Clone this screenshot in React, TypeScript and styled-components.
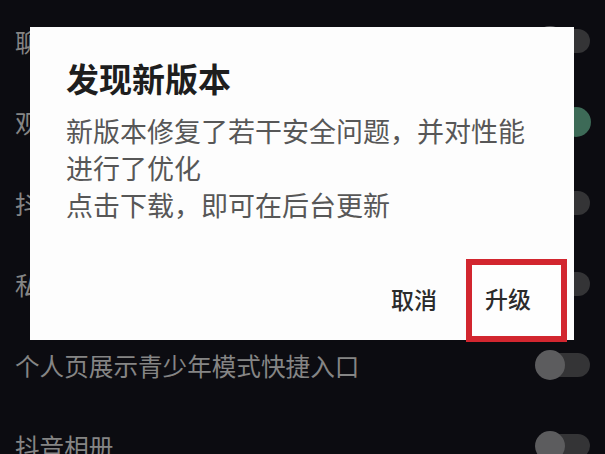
import React from "react";
import styled, { createGlobalStyle } from "styled-components";

const GlobalStyle = createGlobalStyle`
  html, body {
    margin: 0;
    padding: 0;
    background: #0c0c11;
  }
  body {
    font-family: "Noto Sans CJK SC", "Noto Sans", sans-serif;
  }
  * { box-sizing: border-box; }
`;

const Screen = styled.div`
  position: relative;
  width: 605px;
  height: 454px;
  overflow: hidden;
  background: #0c0c11;
`;

const SettingsList = styled.div`
  display: flex;
  flex-direction: column;
`;

const SettingRow = styled.div`
  height: 81px;
  flex: none;
  display: flex;
  align-items: center;
  justify-content: space-between;
  padding: 0 15px;
`;

const RowLabel = styled.span`
  font-size: 24.6px;
  line-height: 32px;
  color: #858585;
  white-space: nowrap;
`;

const Track = styled.div<{ $on?: boolean }>`
  width: 54px;
  height: 24px;
  border-radius: 12px;
  display: flex;
  align-items: center;
  justify-content: ${(p) => (p.$on ? "flex-end" : "flex-start")};
  background: ${(p) => (p.$on ? "#253d33" : "#343436")};
`;

const Knob = styled.div<{ $on?: boolean }>`
  width: 30px;
  height: 30px;
  flex: none;
  border-radius: 50%;
  margin: 0 -1px;
  background: ${(p) => (p.$on ? "#3d6a57" : "#5c5c5e")};
`;

const Dialog = styled.div`
  position: absolute;
  top: 27px;
  left: 30px;
  width: 544px;
  height: 313px;
  background: #fdfdfd;
  padding: 31px 36px 0 36px;
  display: flex;
  flex-direction: column;
`;

const Title = styled.h2`
  margin: 0;
  font-size: 33px;
  line-height: 40px;
  font-weight: 700;
  color: #1e1e1e;
  white-space: nowrap;
`;

const Body = styled.div`
  margin-top: 14px;
  font-size: 27px;
  line-height: 37px;
  color: #575757;
`;

const BodyLine = styled.span`
  display: block;
  white-space: nowrap;
`;

const Actions = styled.div`
  margin-top: auto;
  margin-right: -29px;
  margin-bottom: -2px;
  display: flex;
  justify-content: flex-end;
  align-items: center;
`;

const CancelButton = styled.button`
  border: none;
  background: none;
  padding: 0;
  margin: 0 29px 3px 0;
  font-family: inherit;
  font-size: 23px;
  line-height: 30px;
  font-weight: 500;
  color: #2b2b2b;
`;

const UpgradeButton = styled.button`
  width: 101px;
  height: 83px;
  border: 6px solid #d2262f;
  background: #fefefe;
  padding: 0 0 5px 13px;
  display: flex;
  align-items: center;
  font-family: inherit;
  font-size: 23px;
  line-height: 30px;
  font-weight: 500;
  color: #2b2b2b;
`;

const rows: { label: string; on?: boolean }[] = [
  { label: "聊天" },
  { label: "观看", on: true },
  { label: "抖音" },
  { label: "私信" },
  { label: "个人页展示青少年模式快捷入口" },
  { label: "抖音相册" },
];

export default function App() {
  return (
    <>
      <GlobalStyle />
      <Screen>
        <SettingsList>
          {rows.map((r) => (
            <SettingRow key={r.label}>
              <RowLabel>{r.label}</RowLabel>
              <Track $on={r.on}>
                <Knob $on={r.on} />
              </Track>
            </SettingRow>
          ))}
        </SettingsList>
        <Dialog>
          <Title>发现新版本</Title>
          <Body>
            <BodyLine>新版本修复了若干安全问题，并对性能</BodyLine>
            <BodyLine>进行了优化</BodyLine>
            <BodyLine>点击下载，即可在后台更新</BodyLine>
          </Body>
          <Actions>
            <CancelButton>取消</CancelButton>
            <UpgradeButton>升级</UpgradeButton>
          </Actions>
        </Dialog>
      </Screen>
    </>
  );
}
